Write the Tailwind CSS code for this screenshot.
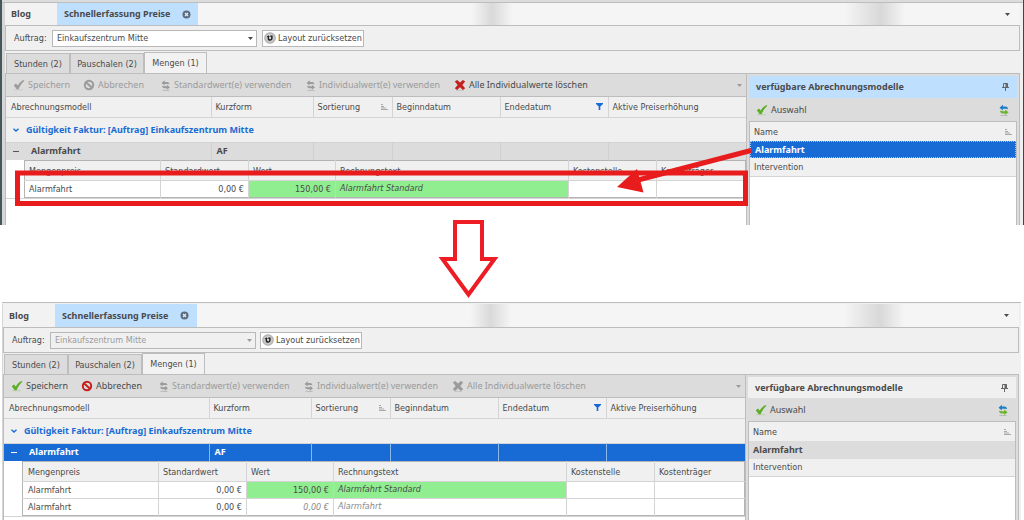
<!DOCTYPE html>
<html lang="de">
<head>
<meta charset="utf-8">
<title>Schnellerfassung Preise</title>
<script src="https://cdn.jsdelivr.net/npm/@tailwindcss/browser@4"></script>
</head>
<body class="relative overflow-x-hidden bg-white font-['DejaVu_Sans_Condensed','DejaVu_Sans',sans-serif] text-[9px] leading-3 text-[#4a4a4a]">

<svg class="hidden" aria-hidden="true">
  <symbol id="i-close" viewBox="0 0 9 9"><circle cx="4.500" cy="4.500" r="4" fill="#5d6b7c"/><path d="M3 3l3 3M6 3l-3 3" stroke="#dceeff" stroke-width="1.300"/></symbol>
  <symbol id="i-down" viewBox="0 0 5 3"><path d="M0 0h5L2.500 3z" fill="currentColor"/></symbol>
  <symbol id="i-reset" viewBox="0 0 12 12"><circle cx="6" cy="6" r="5.800" fill="#a9a9a9"/><circle cx="6" cy="6" r="4.800" fill="#c6c6c6"/><circle cx="6" cy="5.800" r="3.400" fill="#d6d6d6"/><path d="M4.300 4.500v1.800a1.800 1.800 0 0 0 3.600 0V4.200H6.300" fill="none" stroke="#222" stroke-width="1.500"/><path d="M2.700 5L4.300 3.300 5.900 5z" fill="#222"/></symbol>
  <symbol id="i-check" viewBox="0 0 12 12"><path d="M1 10.700h9" stroke="currentColor" stroke-opacity=".25"/><path d="M.8 6.200l2.200-1.600 1.700 2C6 4.200 8 2.200 10.600 1l.8.800C9 4 6.900 7 5.500 10.200H3.700z" fill="currentColor"/></symbol>
  <symbol id="i-block" viewBox="0 0 12 12"><circle cx="6" cy="6" r="4.200" fill="none" stroke="currentColor" stroke-width="2"/><path d="M3.200 3.400l5.600 5.200" stroke="currentColor" stroke-width="2"/></symbol>
  <symbol id="i-swap" viewBox="0 0 12 12"><path d="M1.500 4L4.700 1.200v1.700h2.500c1.400 0 2.200.9 2.200 2.600C8.800 5 8.200 4.900 7.200 4.900H4.700v1.700z" fill="currentColor"/><path d="M10 8.200L6.900 5.700v1.600H4.500c-1 0-1.700-.2-2.300-.8 0 1.800.8 2.700 2.200 2.700h2.500v1.500z" fill="currentColor"/><path d="M2.500 11.400h7" stroke="#888" stroke-opacity=".4"/></symbol>
  <symbol id="i-refresh" viewBox="0 0 12 12"><path d="M1.500 3.800L4.900.700v1.800h2.600c1.600 0 2.500 1 2.500 3C9.300 4.900 8.600 4.800 7.500 4.800H4.900v1.800z" fill="#1c7fc4"/><path d="M10.600 8.300L7.100 5.500v1.700H4.500c-1.100 0-1.900-.2-2.500-.9 0 2 .9 3.100 2.400 3.100h2.700v1.700z" fill="#6cb52d"/><path d="M2.500 11.500h7" stroke="#888" stroke-opacity=".4"/></symbol>
  <symbol id="i-x" viewBox="0 0 12 12"><path d="M2 11.300h8" stroke="#888" stroke-opacity=".3"/><path d="M.8 2.600L3.100.9 6 3.600 8.900.9l2.300 1.700L8.300 6l2.900 3.300-2.300 1.800-2.900-2.800-2.900 2.800-2.300-1.800L3.700 6z" fill="currentColor"/></symbol>
  <symbol id="i-sort" viewBox="0 0 7 7"><path d="M0 1.500h2M0 3.500h3M0 5h5M0 6.500h7" stroke="#a9a9a9" fill="none"/></symbol>
  <symbol id="i-filter" viewBox="0 0 7 7"><path d="M0 0h7v1L4.300 3.600V7H2.700V3.600L0 1z" fill="#186bd4"/></symbol>
  <symbol id="i-pin" viewBox="0 0 7 8"><path d="M1.500.500h4v4h-4zM0 4.500h7M3.500 4.500V8" fill="none" stroke="#666"/><path d="M3.500 0h2v5h-2z" fill="#666"/></symbol>
  <symbol id="i-chev" viewBox="0 0 6 4"><path d="M.5.700L3 3 5.500.700" fill="none" stroke="#186bd4" stroke-width="1.400"/></symbol>
</svg>

<!-- Before: billing model is picked in the side list -->
<section class="border-l-2 border-r border-l-[#45565c] border-r-[#444] bg-[#f0f0f0]">
  <div class="h-[3px] border-b border-[#bdbdbd] bg-[#dcdcdc]"></div>
  <div class="mr-[3px] border-l-[3px] border-[#d6d6d6]">
    <nav class="flex h-[23px] items-stretch border-b border-[#bdbdbd] bg-linear-to-r from-[#f5f5f5] from-46% via-[#d9d9d9] via-48% to-[#f5f5f5] to-50% font-['Noto_Sans',sans-serif] font-bold">
      <button class="w-[52px] bg-[#f2f2f2] pl-1.5 text-left">Blog</button>
      <button class="flex w-[141px] items-center gap-3 bg-[#bfdfff] pl-[7px]">Schnellerfassung Preise <svg class="size-[9px]"><use href="#i-close"/></svg></button>
      <span class="flex-1"></span>
      <span class="w-[60px] bg-linear-to-r from-[#f5f5f5] via-[#d8d8d8] via-60% to-[#f5f5f5]"></span>
      <button class="flex w-[115px] items-center justify-end bg-[#f5f5f5] pr-2.5" aria-label="Fenster"><svg class="h-[3px] w-[5px]"><use href="#i-down"/></svg></button>
    </nav>
    <div class="flex h-[25px] items-center border border-t-0 border-[#bdbdbd] pl-2">
      <label for="auftrag1" class="w-[38px]">Auftrag:</label>
      <span class="relative h-[17px] w-[205px]">
        <select id="auftrag1" class="h-full w-full appearance-none border border-[#b8b8b8] bg-white pl-1 leading-3"><option>Einkaufszentrum Mitte</option></select>
        <svg class="pointer-events-none absolute top-[7px] right-1 h-[3px] w-[5px]"><use href="#i-down"/></svg>
      </span>
      <button class="ml-[5px] flex h-[17px] items-center gap-0.5 border border-[#b8b8b8] bg-white px-px whitespace-nowrap"><svg class="size-3"><use href="#i-reset"/></svg>Layout zurücksetzen</button>
    </div>
    <div class="flex h-[22px] items-end pl-px">
      <button class="h-5 w-16 border border-b-0 border-[#bdbdbd] bg-[#dcdcdc]">Stunden (2)</button>
      <button class="h-5 w-[74px] border border-b-0 border-[#bdbdbd] bg-[#dcdcdc]">Pauschalen (2)</button>
      <button class="h-[21px] w-[63px] border border-b-0 border-[#bdbdbd] bg-[#f2f2f2]">Mengen (1)</button>
    </div>
    <div class="flex items-stretch border border-b-0 border-[#bdbdbd] bg-[#dcdcdc]">
      <main class="min-w-0 flex-1 bg-white">
        <div class="flex h-[23px] items-center border-b border-[#bdbdbd] bg-[#dcdcdc] pl-[7px] font-['Noto_Sans',sans-serif] whitespace-nowrap text-[#9b9b9b]">
          <button class="flex w-[70px] items-center gap-[3px]" disabled><svg class="size-3"><use href="#i-check"/></svg>Speichern</button>
          <button class="flex w-[77px] items-center gap-[3px]" disabled><svg class="size-3"><use href="#i-block"/></svg>Abbrechen</button>
          <button class="flex w-[145px] items-center gap-0.5" disabled><svg class="size-3"><use href="#i-swap"/></svg>Standardwert(e) verwenden</button>
          <button class="flex w-[149px] items-center gap-0.5" disabled><svg class="size-3"><use href="#i-swap"/></svg>Individualwert(e) verwenden</button>
          <button class="flex items-center gap-[3px] text-[#4a4a4a]"><svg class="size-3 text-[#c5201c]"><use href="#i-x"/></svg>Alle Individualwerte löschen</button>
          <svg class="mr-1 ml-auto h-[3px] w-[5px]"><use href="#i-down"/></svg>
        </div>
        <table class="w-full table-fixed border-collapse text-left">
          <colgroup><col class="w-[205px]"><col class="w-[102px]"><col class="w-[79px]"><col class="w-[108px]"><col class="w-[108px]"><col></colgroup>
          <thead>
            <tr class="h-5 border-b border-[#d4d4d4] bg-[#f0f0f0]">
              <th class="border-r border-[#d4d4d4] pl-[5px] font-normal">Abrechnungsmodell</th>
              <th class="border-r border-[#d4d4d4] pl-1 font-normal">Kurzform</th>
              <th class="border-r border-[#d4d4d4] px-1 font-normal"><div class="flex items-center justify-between">Sortierung<svg class="size-[7px]"><use href="#i-sort"/></svg></div></th>
              <th class="border-r border-[#d4d4d4] pl-1 font-normal">Beginndatum</th>
              <th class="border-r border-[#d4d4d4] pr-[5px] pl-1 font-normal"><div class="flex items-center justify-between">Endedatum<svg class="size-[7px]"><use href="#i-filter"/></svg></div></th>
              <th class="pl-1 font-normal">Aktive Preiserhöhung</th>
            </tr>
          </thead>
          <tbody>
            <tr class="h-[25px] border-b border-[#d4d4d4] bg-[#f0f0f0]">
              <td colspan="6" class="pl-[7px] font-['Noto_Sans',sans-serif] font-bold text-[#186bd4]"><div class="flex items-center gap-[7px]"><svg class="h-1 w-1.5"><use href="#i-chev"/></svg>Gültigkeit Faktur: [Auftrag] Einkaufszentrum Mitte</div></td>
            </tr>
            <tr class="h-[18px] bg-[#dcdcdc] font-['Noto_Sans',sans-serif] font-bold">
              <td class="border-r border-[#d0d0d0] pl-[7px]"><div class="flex items-center gap-3"><span class="h-px w-1.5 bg-[#555]"></span>Alarmfahrt</div></td>
              <td class="border-r border-[#d0d0d0] pl-[5px]">AF</td>
              <td class="border-r border-[#d0d0d0]"></td><td class="border-r border-[#d0d0d0]"></td><td class="border-r border-[#d0d0d0]"></td><td></td>
            </tr>
            <tr>
              <td colspan="6" class="border-b border-[#d4d4d4] pl-[18px]">
                <table class="w-full table-fixed border-collapse border border-[#b4b4b4] bg-white text-left">
                  <colgroup><col class="w-[136px]"><col class="w-[88px]"><col class="w-[87px]"><col class="w-[233px]"><col class="w-[88px]"><col></colgroup>
                  <thead><tr class="h-5 border-b border-[#d4d4d4] bg-[#f0f0f0]">
                    <th class="border-r border-[#d4d4d4] pl-1 font-normal">Mengenpreis</th><th class="border-r border-[#d4d4d4] pl-1 font-normal">Standardwert</th><th class="border-r border-[#d4d4d4] pl-1 font-normal">Wert</th><th class="border-r border-[#d4d4d4] pl-1 font-normal">Rechnungstext</th><th class="border-r border-[#d4d4d4] pl-1 font-normal">Kostenstelle</th><th class="pl-1 font-normal">Kostenträger</th>
                  </tr></thead>
                  <tbody><tr class="h-[17px]">
                    <td class="border-r border-[#d4d4d4] pl-1">Alarmfahrt</td><td class="border-r border-[#d4d4d4] pr-1 text-right">0,00 €</td><td class="border-r border-[#b9dcb9] bg-[#90ee90] pr-1 text-right">150,00 €</td><td class="border-r border-[#d4d4d4] bg-[#90ee90] pb-0.5 pl-1 italic">Alarmfahrt Standard</td><td class="border-r border-[#d4d4d4]"></td><td></td>
                  </tr></tbody>
                </table>
              </td>
            </tr>
          </tbody>
        </table>
      </main>
      <aside class="flex min-h-[151px] w-[273px] flex-col border-l border-[#bdbdbd] px-0.5 pt-0.5">
        <h2 class="flex h-[22px] items-center justify-between bg-[#bfdfff] pr-2 pl-[7px] font-['Noto_Sans',sans-serif] font-bold">verfügbare Abrechnungsmodelle<svg class="h-2 w-[7px]"><use href="#i-pin"/></svg></h2>
        <div class="flex h-[23px] items-center justify-between pr-[7px] pl-[7px]">
          <button class="flex items-center gap-[3px] font-['Noto_Sans',sans-serif]"><svg class="size-3 text-[#5cae28]"><use href="#i-check"/></svg>Auswahl</button>
          <button aria-label="Aktualisieren"><svg class="size-3"><use href="#i-refresh"/></svg></button>
        </div>
        <div class="flex-1 border border-b-0 border-[#bdbdbd] bg-white">
          <table class="w-full border-collapse text-left">
            <thead><tr class="h-[19px] bg-[#f0f0f0]"><th class="px-1 font-normal"><div class="flex items-center justify-between">Name<svg class="size-[7px]"><use href="#i-sort"/></svg></div></th></tr></thead>
            <tbody>
              <tr class="h-[17px] bg-[#186bd4] font-['Noto_Sans',sans-serif] font-bold text-white outline-1 -outline-offset-1 outline-dotted outline-[#9cc6f5]"><td class="pl-[5px]">Alarmfahrt</td></tr>
              <tr class="h-[18px] border-b border-[#d4d4d4] bg-[#f0f0f0]"><td class="pl-1">Intervention</td></tr>
            </tbody>
          </table>
        </div>
      </aside>
    </div>
  </div>
</section>

<!-- After: a further price row has been added -->
<section class="mt-[77px] mr-[3px] ml-0.5 border-t border-[#bdbdbd] bg-[#f0f0f0]">
  <div class="mr-0.5 border-l border-[#d6d6d6]">
    <nav class="mt-px flex h-6 items-stretch border-b border-[#bdbdbd] bg-linear-to-r from-[#f5f5f5] from-46% via-[#d9d9d9] via-48% to-[#f5f5f5] to-50% font-['Noto_Sans',sans-serif] font-bold">
      <button class="w-[52px] bg-[#f2f2f2] pl-1.5 text-left">Blog</button>
      <button class="flex w-[142px] items-center gap-3 bg-[#bfdfff] pl-[7px]">Schnellerfassung Preise <svg class="size-[9px]"><use href="#i-close"/></svg></button>
      <span class="flex-1"></span>
      <span class="w-[60px] bg-linear-to-r from-[#f5f5f5] via-[#d8d8d8] via-60% to-[#f5f5f5]"></span>
      <button class="flex w-[115px] items-center justify-end bg-[#f5f5f5] pr-2.5" aria-label="Fenster"><svg class="h-[3px] w-[5px]"><use href="#i-down"/></svg></button>
    </nav>
    <div class="flex h-[25px] items-center border border-t-0 border-[#bdbdbd] pl-2">
      <label for="auftrag2" class="w-[38px]">Auftrag:</label>
      <span class="relative h-[17px] w-[206px] text-[#9b9b9b]">
        <select id="auftrag2" disabled class="h-full w-full appearance-none border border-[#b8b8b8] pl-1 leading-3 opacity-100"><option>Einkaufszentrum Mitte</option></select>
        <svg class="pointer-events-none absolute top-[7px] right-1 h-[3px] w-[5px]"><use href="#i-down"/></svg>
      </span>
      <button class="ml-1 flex h-[17px] items-center gap-0.5 border border-[#b8b8b8] bg-white px-px whitespace-nowrap"><svg class="size-3"><use href="#i-reset"/></svg>Layout zurücksetzen</button>
    </div>
    <div class="flex h-[21px] items-end pl-px">
      <button class="h-5 w-16 border border-b-0 border-[#bdbdbd] bg-[#dcdcdc]">Stunden (2)</button>
      <button class="h-5 w-[74px] border border-b-0 border-[#bdbdbd] bg-[#dcdcdc]">Pauschalen (2)</button>
      <button class="h-[21px] w-[63px] border border-b-0 border-[#bdbdbd] bg-[#f2f2f2]">Mengen (1)</button>
    </div>
    <div class="flex items-stretch border border-b-0 border-[#bdbdbd] bg-[#dcdcdc]">
      <main class="min-w-0 flex-1 bg-white">
        <div class="flex h-[23px] items-center border-b border-[#bdbdbd] bg-[#dcdcdc] pl-[7px] font-['Noto_Sans',sans-serif] whitespace-nowrap text-[#9b9b9b]">
          <button class="flex w-[70px] items-center gap-[3px] text-[#4a4a4a]"><svg class="size-3 text-[#5cae28]"><use href="#i-check"/></svg>Speichern</button>
          <button class="flex w-[77px] items-center gap-[3px] text-[#4a4a4a]"><svg class="size-3 text-[#c5201c]"><use href="#i-block"/></svg>Abbrechen</button>
          <button class="flex w-[145px] items-center gap-0.5" disabled><svg class="size-3"><use href="#i-swap"/></svg>Standardwert(e) verwenden</button>
          <button class="flex w-[149px] items-center gap-0.5" disabled><svg class="size-3"><use href="#i-swap"/></svg>Individualwert(e) verwenden</button>
          <button class="flex items-center gap-[3px]" disabled><svg class="size-3"><use href="#i-x"/></svg>Alle Individualwerte löschen</button>
          <svg class="mr-1 ml-auto h-[3px] w-[5px]"><use href="#i-down"/></svg>
        </div>
        <table class="w-full table-fixed border-collapse text-left">
          <colgroup><col class="w-[205px]"><col class="w-[102px]"><col class="w-[79px]"><col class="w-[108px]"><col class="w-[108px]"><col></colgroup>
          <thead>
            <tr class="h-5 border-b border-[#d4d4d4] bg-[#f0f0f0]">
              <th class="border-r border-[#d4d4d4] pl-[5px] font-normal">Abrechnungsmodell</th>
              <th class="border-r border-[#d4d4d4] pl-1 font-normal">Kurzform</th>
              <th class="border-r border-[#d4d4d4] px-1 font-normal"><div class="flex items-center justify-between">Sortierung<svg class="size-[7px]"><use href="#i-sort"/></svg></div></th>
              <th class="border-r border-[#d4d4d4] pl-1 font-normal">Beginndatum</th>
              <th class="border-r border-[#d4d4d4] pr-[5px] pl-1 font-normal"><div class="flex items-center justify-between">Endedatum<svg class="size-[7px]"><use href="#i-filter"/></svg></div></th>
              <th class="pl-1 font-normal">Aktive Preiserhöhung</th>
            </tr>
          </thead>
          <tbody>
            <tr class="h-[25px] border-b border-[#d4d4d4] bg-[#f0f0f0]">
              <td colspan="6" class="pl-[7px] font-['Noto_Sans',sans-serif] font-bold text-[#186bd4]"><div class="flex items-center gap-[7px]"><svg class="h-1 w-1.5"><use href="#i-chev"/></svg>Gültigkeit Faktur: [Auftrag] Einkaufszentrum Mitte</div></td>
            </tr>
            <tr class="h-[18px] bg-[#186bd4] font-['Noto_Sans',sans-serif] font-bold text-white">
              <td class="border-r border-[#8db8ea] pl-[7px]"><div class="flex items-center gap-3"><span class="h-px w-1.5 bg-white"></span>Alarmfahrt</div></td>
              <td class="border-r border-[#8db8ea] pl-[5px]">AF</td>
              <td class="border-r border-[#8db8ea]"></td><td class="border-r border-[#8db8ea]"></td><td class="border-r border-[#8db8ea]"></td><td></td>
            </tr>
            <tr>
              <td colspan="6" class="border-b border-[#d4d4d4] pl-[18px]">
                <table class="w-full table-fixed border-collapse border border-[#b4b4b4] bg-white text-left">
                  <colgroup><col class="w-[136px]"><col class="w-[88px]"><col class="w-[87px]"><col class="w-[233px]"><col class="w-[88px]"><col></colgroup>
                  <thead><tr class="h-5 border-b border-[#d4d4d4] bg-[#f0f0f0]">
                    <th class="border-r border-[#d4d4d4] pl-[5px] font-normal">Mengenpreis</th><th class="border-r border-[#d4d4d4] pl-1 font-normal">Standardwert</th><th class="border-r border-[#d4d4d4] pl-1 font-normal">Wert</th><th class="border-r border-[#d4d4d4] pl-1 font-normal">Rechnungstext</th><th class="border-r border-[#d4d4d4] pl-1 font-normal">Kostenstelle</th><th class="pl-1 font-normal">Kostenträger</th>
                  </tr></thead>
                  <tbody>
                  <tr class="h-[17px] border-b border-[#d4d4d4]">
                    <td class="border-r border-[#d4d4d4] pl-[5px]">Alarmfahrt</td><td class="border-r border-[#d4d4d4] pr-1 text-right">0,00 €</td><td class="border-r border-[#b9dcb9] bg-[#90ee90] pr-1 text-right">150,00 €</td><td class="border-r border-[#d4d4d4] bg-[#90ee90] pb-0.5 pl-1 italic">Alarmfahrt Standard</td><td class="border-r border-[#d4d4d4]"></td><td></td>
                  </tr>
                  <tr class="h-[17px]">
                    <td class="border-r border-[#d4d4d4] pl-[5px]">Alarmfahrt</td><td class="border-r border-[#d4d4d4] pr-1 text-right">0,00 €</td><td class="border-r border-[#d4d4d4] pr-1 text-right text-[#8a8a8a] italic">0,00 €</td><td class="border-r border-[#d4d4d4] pb-0.5 pl-1 text-[#8a8a8a] italic">Alarmfahrt</td><td class="border-r border-[#d4d4d4]"></td><td></td>
                  </tr></tbody>
                </table>
              </td>
            </tr>
          </tbody>
        </table>
      </main>
      <aside class="flex min-h-[146px] w-[273px] flex-col border-l border-[#bdbdbd] px-0.5 pt-0.5">
        <h2 class="flex h-[21px] items-center justify-between bg-[#f0f0f0] pr-2 pl-[7px] font-['Noto_Sans',sans-serif] font-bold">verfügbare Abrechnungsmodelle<svg class="h-2 w-[7px]"><use href="#i-pin"/></svg></h2>
        <div class="flex h-[23px] items-center justify-between pr-[7px] pl-[7px]">
          <button class="flex items-center gap-[3px] font-['Noto_Sans',sans-serif]"><svg class="size-3 text-[#5cae28]"><use href="#i-check"/></svg>Auswahl</button>
          <button aria-label="Aktualisieren"><svg class="size-3"><use href="#i-refresh"/></svg></button>
        </div>
        <div class="flex-1 border border-b-0 border-[#bdbdbd] bg-white">
          <table class="w-full border-collapse text-left">
            <thead><tr class="h-[19px] bg-[#f0f0f0]"><th class="px-1 font-normal"><div class="flex items-center justify-between">Name<svg class="size-[7px]"><use href="#i-sort"/></svg></div></th></tr></thead>
            <tbody>
              <tr class="h-[18px] bg-[#dcdcdc] font-['Noto_Sans',sans-serif] font-bold"><td class="pl-1">Alarmfahrt</td></tr>
              <tr class="h-[17px] border-b border-[#d4d4d4] bg-[#f0f0f0]"><td class="pl-1">Intervention</td></tr>
            </tbody>
          </table>
        </div>
      </aside>
    </div>
  </div>
</section>

<!-- Red annotations drawn over both views -->
<svg class="pointer-events-none absolute top-0 left-0 h-[302px] w-[1024px]" viewBox="0 0 1024 302" aria-hidden="true" fill="none">
  <rect x="17.500" y="173" width="728" height="30.500" stroke="#e81c1c" stroke-width="5"/>
  <path d="M751 150.500L638 180" stroke="#e81c1c" stroke-width="5"/>
  <path d="M617 187l20-18 6.500 23.500z" fill="#e81c1c"/>
  <path d="M455 222h27v37h12.500l-26 35.500L442.500 259H455z" stroke="#ee1c24" stroke-width="4"/>
</svg>
</body>
</html>
